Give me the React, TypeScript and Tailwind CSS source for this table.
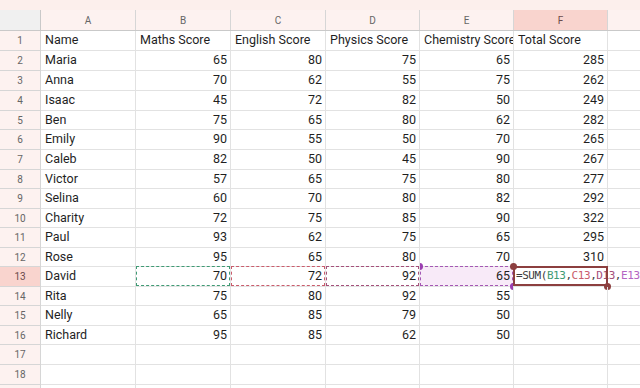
const COLS = [
  { id: 'A', w: 'w-[95px]' },
  { id: 'B', w: 'w-[95px]' },
  { id: 'C', w: 'w-[95px]' },
  { id: 'D', w: 'w-[94px]' },
  { id: 'E', w: 'w-[94px]' },
  { id: 'F', w: 'w-[94px]' },
];

const ROWS: (string | number)[][] = [
  ['Name', 'Maths Score', 'English Score', 'Physics Score', 'Chemistry Score', 'Total Score'],
  ['Maria', 65, 80, 75, 65, 285],
  ['Anna', 70, 62, 55, 75, 262],
  ['Isaac', 45, 72, 82, 50, 249],
  ['Ben', 75, 65, 80, 62, 282],
  ['Emily', 90, 55, 50, 70, 265],
  ['Caleb', 82, 50, 45, 90, 267],
  ['Victor', 57, 65, 75, 80, 277],
  ['Selina', 60, 70, 80, 82, 292],
  ['Charity', 72, 75, 85, 90, 322],
  ['Paul', 93, 62, 75, 65, 295],
  ['Rose', 95, 65, 80, 70, 310],
  ['David', 70, 72, 92, 65, ''],
  ['Rita', 75, 80, 92, 55, ''],
  ['Nelly', 65, 85, 79, 50, ''],
  ['Richard', 95, 85, 62, 50, ''],
  ['', '', '', '', '', ''],
  ['', '', '', '', '', ''],
  ['', '', '', '', '', ''],
];

// row heights approximate the 19.65px pitch of the shot
const HEIGHTS = ['h-[20px]', 'h-[20px]', 'h-[20px]', 'h-[20px]', 'h-[19px]', 'h-[20px]', 'h-[20px]', 'h-[19px]', 'h-[20px]', 'h-[19px]', 'h-[20px]', 'h-[19px]', 'h-[20px]', 'h-[19px]', 'h-[20px]', 'h-[19px]', 'h-[20px]', 'h-[20px]', 'h-[20px]'];

const REF_BORDER: Record<string, string> = {
  B: 'border-[#3f9a74]',
  C: 'border-[#c95c6c]',
  D: 'border-[#a4507a]',
  E: 'border-[#a457b4]',
};

function Formula() {
  return (
    <div className="absolute left-[2px] top-0 h-full flex items-center whitespace-nowrap text-[11px] tracking-[-0.45px] text-[#3c3c3c]" style={{ fontFamily: '"DejaVu Sans Mono", "Liberation Mono", monospace' }}>
      <span>=SUM(</span>
      <span className="text-[#3f9a74]">B13</span>
      <span>,</span>
      <span className="text-[#c95c6c]">C13</span>
      <span>,</span>
      <span className="text-[#a4507a]">D13</span>
      <span>,</span>
      <span className="text-[#b465c2]">E13</span>
    </div>
  );
}

export default function App() {
  return (
    <div className="w-[640px] h-[388px] overflow-hidden bg-white text-[12.5px] text-[#1f1f1f]" style={{ fontFamily: 'Roboto, "Liberation Sans", sans-serif' }}>
      {/* top strip */}
      <div className="h-[10px] bg-[#fcefec]" />

      {/* column headers */}
      <div className="flex h-[21px] bg-[#fdf2f0] border-b border-[#c9c9c9]">
        <div className="w-[41px] shrink-0 bg-[#f0f0f0] border-r border-[#c9c9c9]" />
        {COLS.map(c => (
          <div key={c.id}
            className={`${c.w} shrink-0 flex items-center justify-center text-[10px] border-r border-[#d6d6d6] ${c.id === 'F' ? 'bg-[#f9d4ce] text-[#6b4a4a]' : 'text-[#666]'}`}>
            {c.id}
          </div>
        ))}
        <div className="flex-1" />
      </div>

      {/* rows */}
      {ROWS.map((row, r) => {
        const n = r + 1;
        const active = n === 13;
        return (
          <div key={n} className={`flex ${HEIGHTS[r]}`}>
            <div className={`w-[41px] shrink-0 flex items-center justify-center text-[10px] border-r border-b border-[#d6d6d6] ${active ? 'bg-[#f9d4ce] text-[#6b4a4a]' : 'bg-[#fdf2f0] text-[#666]'}`}>
              {n < 19 ? n : ''}
            </div>
            {COLS.map((c, i) => {
              const v = row[i];
              const num = typeof v === 'number';
              const editing = active && c.id === 'F';
              return (
                <div key={c.id}
                  className={`${c.w} shrink-0 relative flex items-center border-r border-b border-[#e2e2e2] ${editing ? '' : 'overflow-x-clip'} ${num ? 'justify-end pr-[3px]' : 'pl-[4px]'} ${active && c.id === 'E' ? 'bg-[#f8eaf8]' : ''}`}>
                  <span className="relative whitespace-nowrap">{v}</span>
                  {active && REF_BORDER[c.id] && (
                    <div className={`absolute -top-px left-0 right-0 bottom-0 border border-dashed ${REF_BORDER[c.id]}`} />
                  )}
                  {editing && (
                    <>
                      <Formula />
                      <div className="absolute -top-px -left-px -right-px bottom-0 border-2 border-[#8c3f3f]" />
                      <div className="absolute -top-[4px] -left-[4px] w-[7px] h-[7px] rounded-full bg-[#8c3f3f]" />
                      <div className="absolute -bottom-[4px] -right-[4px] w-[7px] h-[7px] rounded-full bg-[#8c3f3f]" />
                    </>
                  )}
                  {active && c.id === 'E' && (
                    <>
                      <div className="absolute -top-[4px] -left-[4px] w-[7px] h-[7px] rounded-full bg-[#9b3fb1]" />
                      <div className="absolute -bottom-[4px] -right-[4px] w-[7px] h-[7px] rounded-full bg-[#9b3fb1] z-10" />
                    </>
                  )}
                </div>
              );
            })}
            <div className="flex-1 border-b border-[#e2e2e2]" />
          </div>
        );
      })}
    </div>
  );
}
